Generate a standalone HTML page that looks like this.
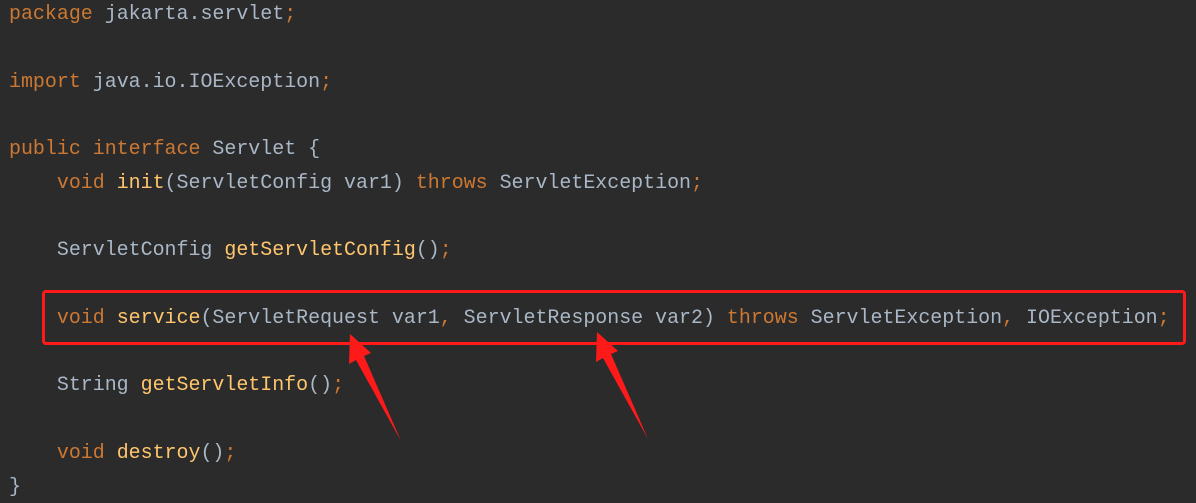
<!DOCTYPE html>
<html><head><style>
body{margin:0;width:1196px;height:501px;background:#2b2b2b;overflow:hidden;position:relative}
pre{margin:0;position:absolute;left:9px;top:-3px;font-family:"Liberation Mono",monospace;font-size:19.95px;line-height:33.75px;color:#a9b7c6}
.k{color:#cc7832}.m{color:#ffc66d}
</style></head><body>
<pre><span class="k">package</span> jakarta.servlet<span class="k">;</span>

<span class="k">import</span> java.io.IOException<span class="k">;</span>

<span class="k">public interface</span> Servlet {
    <span class="k">void</span> <span class="m">init</span>(ServletConfig var1) <span class="k">throws</span> ServletException<span class="k">;</span>

    ServletConfig <span class="m">getServletConfig</span>()<span class="k">;</span>

    <span class="k">void</span> <span class="m">service</span>(ServletRequest var1<span class="k">,</span> ServletResponse var2) <span class="k">throws</span> ServletException<span class="k">,</span> IOException<span class="k">;</span>

    String <span class="m">getServletInfo</span>()<span class="k">;</span>

    <span class="k">void</span> <span class="m">destroy</span>()<span class="k">;</span>
}</pre>
<div style="position:absolute;left:42px;top:290px;width:1138px;height:49px;border:3px solid #ff1a1a;border-radius:4px"></div>
<svg width="1196" height="501" style="position:absolute;left:0;top:0">
<polygon points="350,334 371,353 364,356 401,441 356,360 349,364" fill="#ff1a1a"/>
<polygon points="597,332 618,351 611,354 648,439 603,358 596,362" fill="#ff1a1a"/>
</svg>
</body></html>
